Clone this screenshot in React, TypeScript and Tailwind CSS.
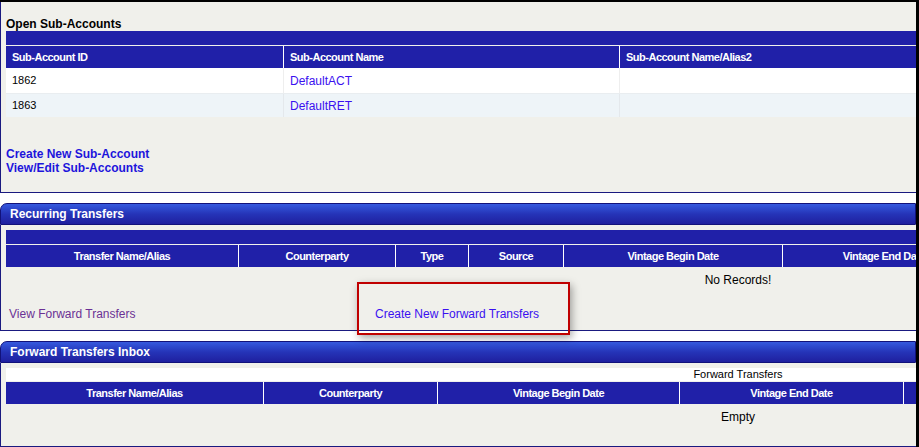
const font = { fontFamily: '"Liberation Sans", Arial, sans-serif' };

interface Col {
  label: string;
  width: number;
}

const recurringCols: Col[] = [
  { label: "Transfer Name/Alias", width: 232 },
  { label: "Counterparty", width: 157 },
  { label: "Type", width: 73 },
  { label: "Source", width: 95 },
  { label: "Vintage Begin Date", width: 219 },
  { label: "Vintage End Date", width: 203 },
  { label: "", width: 485 },
];

const inboxCols: Col[] = [
  { label: "Transfer Name/Alias", width: 257 },
  { label: "Counterparty", width: 174 },
  { label: "Vintage Begin Date", width: 242 },
  { label: "Vintage End Date", width: 224 },
  { label: "", width: 567 },
];

function HeaderRow({ cols }: { cols: Col[] }) {
  return (
    <div className="flex h-[22px] w-[1464px] bg-[#2020a8]">
      {cols.map((c, i) => (
        <div
          key={i}
          style={{ width: c.width }}
          className={`flex shrink-0 items-center justify-center text-[11px] font-bold tracking-[-0.5px] whitespace-nowrap text-white ${
            i > 0 ? "border-l border-white" : ""
          }`}
        >
          {c.label}
        </div>
      ))}
    </div>
  );
}

function PanelTitle({ title }: { title: string }) {
  return (
    <div className="flex h-[22px] items-center rounded-tl-[7px] border border-[#12127a] bg-linear-to-b from-[#3659de] via-[#2534b8] to-[#1f1f9f] pl-[9px] text-[12px] font-bold text-white">
      {title}
    </div>
  );
}

export default function App() {
  return (
    <div
      style={font}
      className="h-[447px] w-[919px] overflow-hidden border-t-2 border-r-[3px] border-black bg-white text-black"
    >
      {/* Open Sub-Accounts */}
      <section className="h-[191px] border-b border-l border-[#1a1a80] bg-[#f0f0eb] pl-[5px]">
        <div className="h-[29px] pt-[15px] text-[12px] leading-[14px] font-bold">Open Sub-Accounts</div>
        <div className="h-[14px] bg-[#2020a8]" />
        <div className="mt-px flex h-[22px] bg-[#2020a8] text-[11px] font-bold tracking-[-0.5px] text-white">
          <div className="flex w-[277px] items-center pl-[6px]">Sub-Account ID</div>
          <div className="flex w-[336px] items-center border-l border-white pl-[6px]">Sub-Account Name</div>
          <div className="flex flex-1 items-center border-l border-white pl-[6px]">Sub-Account Name/Alias2</div>
        </div>
        <div className="flex h-[25px] bg-white text-[11px]">
          <div className="flex w-[277px] items-center pl-[6px]">1862</div>
          <div className="flex w-[336px] items-center border-l border-[#eeeeee] pl-[6px] text-[12px] text-[#3a10f0]">
            DefaultACT
          </div>
          <div className="flex-1 border-l border-[#eeeeee]" />
        </div>
        <div className="flex h-[24px] border-t border-[#e9edf0] bg-[#eef4f8] text-[11px]">
          <div className="flex w-[277px] items-center pl-[6px]">1863</div>
          <div className="flex w-[336px] items-center border-l border-[#e4e8ec] pl-[6px] text-[12px] text-[#3a10f0]">
            DefaultRET
          </div>
          <div className="flex-1 border-l border-[#e4e8ec]" />
        </div>
        <div className="mt-[30px] text-[12px] leading-[14px] font-bold text-[#1d14dc]">
          <div>Create New Sub-Account</div>
          <div>View/Edit Sub-Accounts</div>
        </div>
      </section>

      {/* Recurring Transfers */}
      <section className="mt-[10px]">
        <PanelTitle title="Recurring Transfers" />
        <div className="relative h-[106px] border-b border-l border-[#1a1a80] bg-[#f0f0eb] pt-[5px] pl-[5px]">
          <div className="h-[14px] w-[1464px] bg-[#2020a8]" />
          <div className="mt-px">
            <HeaderRow cols={recurringCols} />
          </div>
          <div className="flex h-[26px] w-[1464px] items-center justify-center text-[12px]">No Records!</div>
          <div className="mt-[14px] flex h-[14px] items-center text-[12px]">
            <span className="ml-[3px] w-[366px] text-[#6b3095]">View Forward Transfers</span>
            <span className="text-[#3a10f0]">Create New Forward Transfers</span>
          </div>
          <div className="pointer-events-none absolute top-[57px] left-[356px] z-10 h-[53px] w-[213px] border-2 border-[#c00000] shadow-[2px_3px_8px_rgba(0,0,0,0.35)]" />
        </div>
      </section>

      {/* Forward Transfers Inbox */}
      <section className="mt-[10px]">
        <PanelTitle title="Forward Transfers Inbox" />
        <div className="h-[84px] border-b border-l border-[#1a1a80] bg-[#f0f0eb] pt-[5px] pl-[5px]">
          <div className="flex h-[13px] w-[1464px] items-center justify-center bg-white text-[11px]">
            Forward Transfers
          </div>
          <div className="mt-px">
            <HeaderRow cols={inboxCols} />
          </div>
          <div className="flex h-[26px] w-[1464px] items-center justify-center text-[12px]">Empty</div>
        </div>
      </section>
    </div>
  );
}
